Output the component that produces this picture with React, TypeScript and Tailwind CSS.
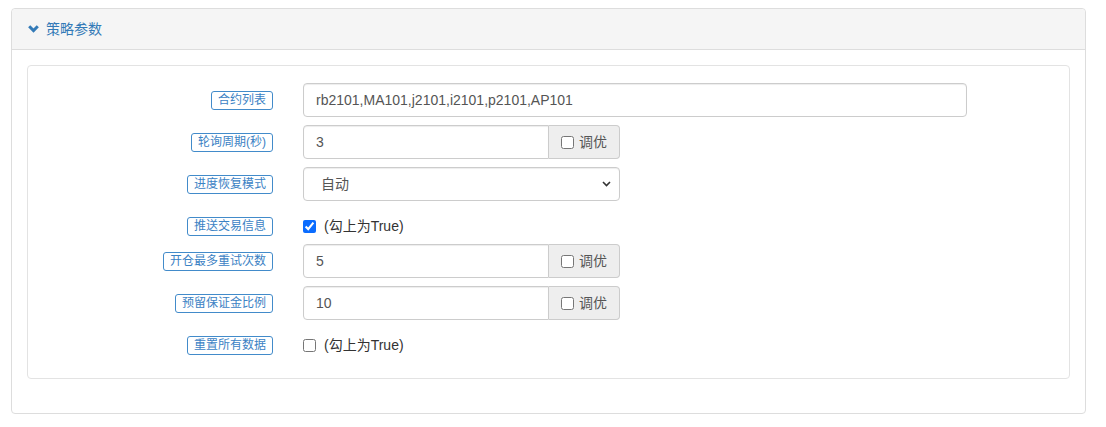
import { useState } from "react";

type Field =
  | { kind: "text"; label: string; value: string; wide?: boolean }
  | { kind: "tune"; label: string; value: string }
  | { kind: "select"; label: string; value: string; options: string[] }
  | { kind: "check"; label: string; checked: boolean };

const fields: Field[] = [
  { kind: "text", label: "合约列表", value: "rb2101,MA101,j2101,i2101,p2101,AP101", wide: true },
  { kind: "tune", label: "轮询周期(秒)", value: "3" },
  { kind: "select", label: "进度恢复模式", value: "自动", options: ["自动", "手动"] },
  { kind: "check", label: "推送交易信息", checked: true },
  { kind: "tune", label: "开仓最多重试次数", value: "5" },
  { kind: "tune", label: "预留保证金比例", value: "10" },
  { kind: "check", label: "重置所有数据", checked: false },
];

const font = { fontFamily: '"Liberation Sans", "Noto Sans CJK SC", sans-serif' };

function ParamLabel({ text }: { text: string }) {
  return (
    <span className="inline-block border border-[#428bca] rounded-[3px] px-[6px] text-[12px] leading-[17px] text-[#3b82c4]">
      {text}
    </span>
  );
}

function Checkbox({ checked }: { checked: boolean }) {
  const [on, setOn] = useState(checked);
  return (
    <input
      type="checkbox"
      checked={on}
      onChange={() => setOn(!on)}
      className="w-[13px] h-[13px] m-0 accent-[#0a6cff]"
    />
  );
}

function FieldControl({ field }: { field: Field }) {
  const input =
    "h-[34px] border border-[#ccc] px-[12px] text-[14px] text-[#555] bg-white outline-none shadow-[inset_0_1px_1px_rgba(0,0,0,0.075)]";

  if (field.kind === "text") {
    return <input className={`${input} w-[664px] rounded-[4px]`} defaultValue={field.value} />;
  }
  if (field.kind === "tune") {
    return (
      <div className="flex w-[317px]">
        <input className={`${input} w-[246px] rounded-l-[4px]`} defaultValue={field.value} />
        <label className="flex items-center gap-[5px] w-[71px] h-[34px] border border-l-0 border-[#ccc] rounded-r-[4px] bg-[#eee] px-[12px] text-[14px] text-[#555]">
          <Checkbox checked={false} />
          调优
        </label>
      </div>
    );
  }
  if (field.kind === "select") {
    return (
      <div className="relative w-[317px]">
        <select
          className={`${input} w-full rounded-[4px] appearance-none pl-[17px]`}
          defaultValue={field.value}
        >
          {field.options.map((o) => (
            <option key={o}>{o}</option>
          ))}
        </select>
        <svg
          className="absolute right-[9px] top-[14px] pointer-events-none"
          width="9"
          height="6"
          viewBox="0 0 9 6"
        >
          <path d="M1 1l3.5 3.5L8 1" fill="none" stroke="#333" strokeWidth="1.6" />
        </svg>
      </div>
    );
  }
  return (
    <label className="flex items-center gap-[8px] text-[14px] leading-[20px] text-[#333]">
      <Checkbox checked={field.checked} />
      (勾上为True)
    </label>
  );
}

export default function App() {
  return (
    <div className="bg-white w-[1106px] h-[427px] pt-[8px] pl-[11px]" style={font}>
      <div className="w-[1075px] border border-[#ddd] rounded-[4px] bg-white">
        <div className="flex items-center gap-[7px] h-[41px] bg-[#f5f5f5] border-b border-[#ddd] rounded-t-[4px] px-[16px] text-[14px] text-[#337ab7]">
          {/* bold chevron-down glyph */}
          <svg width="11" height="8" viewBox="0 0 11 8">
            <path d="M1.2 1.3l4.3 4.3 4.3-4.3" fill="none" stroke="#337ab7" strokeWidth="3" />
          </svg>
          策略参数
        </div>
        <div className="px-[15px] pt-[15px] pb-[14px]">
          <div className="border border-[#e3e3e3] rounded-[4px] bg-white pt-[17px] pb-[23px] mb-[20px]">
            <div className="flex flex-col gap-[8px]">
              {fields.map((f) =>
                f.kind === "check" ? (
                  <div key={f.label} className="flex h-[27px] pt-[7px]">
                    <div className="w-[245px] flex justify-end items-center h-[20px]">
                      <ParamLabel text={f.label} />
                    </div>
                    <div className="ml-[30px] h-[20px] flex items-center">
                      <FieldControl field={f} />
                    </div>
                  </div>
                ) : (
                  <div key={f.label} className="flex items-center h-[34px]">
                    <div className="w-[245px] flex justify-end">
                      <ParamLabel text={f.label} />
                    </div>
                    <div className="ml-[30px]">
                      <FieldControl field={f} />
                    </div>
                  </div>
                )
              )}
            </div>
          </div>
        </div>
      </div>
    </div>
  );
}
